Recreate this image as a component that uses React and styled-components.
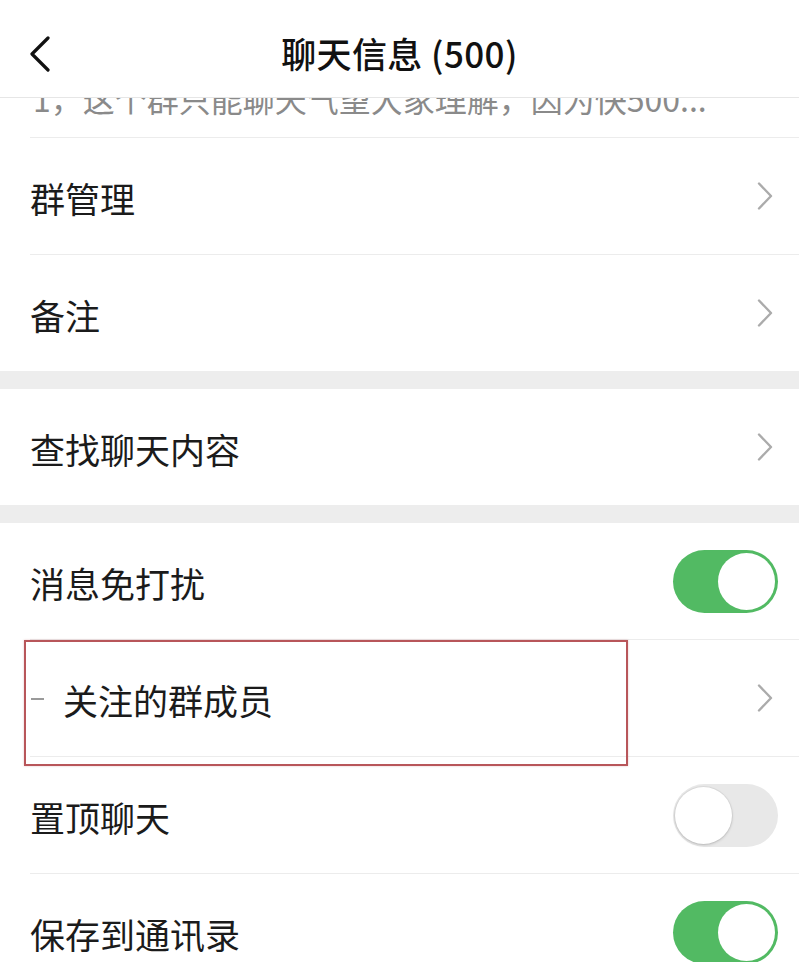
import React from "react";
import styled, { createGlobalStyle } from "styled-components";

const Global = createGlobalStyle`
  html, body { margin: 0; padding: 0; background: #ffffff; }
  body { font-family: "Noto Sans CJK SC", "Noto Sans", sans-serif; -webkit-font-smoothing: antialiased; }
`;

const Page = styled.div`
  width: 799px;
  height: 962px;
  overflow: hidden;
  background: #ffffff;
  display: flex;
  flex-direction: column;
`;

const Header = styled.header`
  position: relative;
  height: 97px;
  flex: none;
  display: flex;
  align-items: center;
  justify-content: center;
  border-bottom: 1px solid #e6e6e6;
  background: #fff;
`;

const BackButton = styled.div`
  position: absolute;
  left: 28px;
  top: 36px;
  width: 26px;
  height: 36px;
  display: flex;
`;

const Title = styled.h1`
  margin: 0;
  font-size: 35px;
  font-weight: 500;
  color: #111;
  letter-spacing: 0.4px;
  padding-top: 8px;
`;

const ClippedDesc = styled.div`
  height: 39px;
  overflow: hidden;
  margin-left: 30px;
  border-bottom: 1px solid #ececec;
  flex: none;
`;

const DescText = styled.div`
  margin-top: -20px;
  padding-left: 3px;
  line-height: 40px;
  font-size: 32px;
  color: #8a8a8a;
  white-space: nowrap;
`;

const Group = styled.div`
  background: #fff;
  flex: none;
`;

const Gap = styled.div`
  height: 18px;
  background: #ededed;
  flex: none;
`;

const Row = styled.div`
  position: relative;
  height: 116px;
  display: flex;
  align-items: center;
  margin-left: 30px;
  padding-right: 26px;
  border-bottom: ${(p) => (p.$last ? "none" : "1px solid #ececec")};
  flex: none;
`;

const Label = styled.span`
  flex: 1;
  font-size: 35px;
  color: #1b1b1b;
  padding-left: ${(p) => (p.$indent ? "33px" : "0")};
  padding-top: 2px;
`;

const Dash = styled.span`
  position: absolute;
  left: 1px;
  top: 58px;
  width: 13px;
  height: 2px;
  background: #9a9a9a;
`;

const Highlight = styled.div`
  position: absolute;
  left: -6px;
  top: 0;
  width: 600px;
  height: 122px;
  border: 2px solid #b8565a;
  box-shadow: 0 0 2px rgba(184, 86, 90, 0.35);
  pointer-events: none;
`;

const ToggleWrap = styled.div`
  margin-right: -5px;
  display: flex;
`;

const Toggle = styled.div`
  position: relative;
  width: 105px;
  height: 63px;
  border-radius: 32px;
  background: ${(p) => (p.$on ? "#52ba63" : "#e8e8e8")};
`;

const Knob = styled.div`
  position: absolute;
  top: 3px;
  left: ${(p) => (p.$on ? "45px" : "2px")};
  width: 57px;
  height: 57px;
  border-radius: 50%;
  background: #fff;
  box-shadow: ${(p) =>
    p.$on ? "none" : "0 1px 3px rgba(0,0,0,0.18), 0 0 0 1px rgba(0,0,0,0.04)"};
`;

const Chevron = () => (
  <svg width="16" height="30" viewBox="0 0 16 30" fill="none">
    <path d="M2 2.5 L14 15 L2 27.5" stroke="#ababab" strokeWidth="2.4" strokeLinecap="round" strokeLinejoin="round" />
  </svg>
);

const BackIcon = () => (
  <svg width="24" height="36" viewBox="0 0 24 36" fill="none">
    <path d="M20 2 L4 18 L20 34" stroke="#111" strokeWidth="3.2" strokeLinecap="round" strokeLinejoin="round" />
  </svg>
);

const Switch = ({ on }) => (
  <ToggleWrap>
    <Toggle $on={on}>
      <Knob $on={on} />
    </Toggle>
  </ToggleWrap>
);

export default function App() {
  return (
    <>
      <Global />
      <Page>
        <Header>
          <BackButton>
            <BackIcon />
          </BackButton>
          <Title>聊天信息 (500)</Title>
        </Header>
        <ClippedDesc>
          <DescText>1，这个群只能聊天气望大家理解，因为快500...</DescText>
        </ClippedDesc>
        <Group>
          <Row>
            <Label>群管理</Label>
            <Chevron />
          </Row>
          <Row $last>
            <Label>备注</Label>
            <Chevron />
          </Row>
        </Group>
        <Gap />
        <Group>
          <Row $last>
            <Label>查找聊天内容</Label>
            <Chevron />
          </Row>
        </Group>
        <Gap />
        <Group>
          <Row>
            <Label>消息免打扰</Label>
            <Switch on />
          </Row>
          <Row>
            <Dash />
            <Label $indent>关注的群成员</Label>
            <Chevron />
            <Highlight />
          </Row>
          <Row>
            <Label>置顶聊天</Label>
            <Switch on={false} />
          </Row>
          <Row $last>
            <Label>保存到通讯录</Label>
            <Switch on />
          </Row>
        </Group>
      </Page>
    </>
  );
}
